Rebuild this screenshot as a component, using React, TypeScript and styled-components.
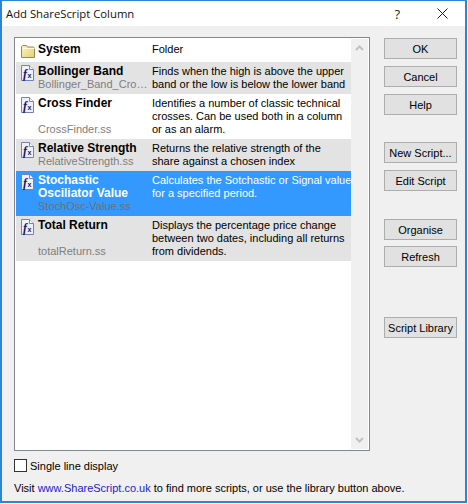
import React from "react";
import styled, { createGlobalStyle } from "styled-components";

type Script = {
    icon: "folder" | "script";
    name: string;
    file?: string;
    lines: string[];
    height: number;
    shaded?: boolean;
    selected?: boolean;
};

const scripts: Script[] = [
    { icon: "folder", name: "System", lines: ["Folder"], height: 22 },
    {
        icon: "script",
        name: "Bollinger Band",
        file: "Bollinger_Band_Cro…",
        lines: ["Finds when the high is above the upper", "band or the low is below the lower band"],
        height: 32,
        shaded: true
    },
    {
        icon: "script",
        name: "Cross Finder",
        file: "CrossFinder.ss",
        lines: [
            "Identifies a number of classic technical",
            "crosses. Can be used both in a column",
            "or as an alarm."
        ],
        height: 45
    },
    {
        icon: "script",
        name: "Relative Strength",
        file: "RelativeStrength.ss",
        lines: ["Returns the relative strength of the", "share against a chosen index"],
        height: 32,
        shaded: true
    },
    {
        icon: "script",
        name: "Stochastic\nOsciliator Value",
        file: "StochOsc-Value.ss",
        lines: ["Calculates the Sotchastic or Signal value", "for a specified period."],
        height: 45,
        selected: true
    },
    {
        icon: "script",
        name: "Total Return",
        file: "totalReturn.ss",
        lines: [
            "Displays the percentage price change",
            "between two dates, including all returns",
            "from dividends."
        ],
        height: 45,
        shaded: true
    }
];

const FolderIcon = () => (
    <IconSvg viewBox="0 0 16 16">
        <defs>
            <linearGradient id="folderFill" x1="0" y1="0" x2="1" y2="1">
                <stop offset="0" stopColor="#fdf6bb" />
                <stop offset="1" stopColor="#e6cf78" />
            </linearGradient>
        </defs>
        <path d="M1.5 14.5V3.5l1-1h4l1 1.5h6l1 1v9.5z" fill="url(#folderFill)" stroke="#8f8a5c" />
        <path d="M2.5 5.5h12" stroke="#fffbd8" />
    </IconSvg>
);

const ScriptIcon = () => (
    <IconSvg viewBox="0 0 16 16">
        <path d="M1.5.5h8l4 4v11h-12z" fill="#eef0fa" stroke="#7d7db8" />
        <path d="M9.5.5v4h4" fill="#fff" stroke="#7d7db8" />
        <FxLetter x="3" y="13">f</FxLetter>
        <FxSmall x="7.5" y="13">x</FxSmall>
    </IconSvg>
);

export default () => (
    <Dialog>
        <GlobalStyle />
        <TitleBar>
            <Title>Add ShareScript Column</Title>
            <HelpGlyph>?</HelpGlyph>
            <CloseIcon viewBox="0 0 11 11">
                <path d="M.5.5l10 10M10.5.5l-10 10" stroke="#1a1a1a" fill="none" />
            </CloseIcon>
        </TitleBar>
        <Body>
            <Main>
                <ListBox>
                    <Rows>
                        {scripts.map(s => (
                            <Row key={s.name} $height={s.height} $shaded={s.shaded} $selected={s.selected}>
                                <IconCell>{s.icon === "folder" ? <FolderIcon /> : <ScriptIcon />}</IconCell>
                                <NameCell>
                                    <Name>{s.name}</Name>
                                    {s.file && <FileName $selected={s.selected}>{s.file}</FileName>}
                                </NameCell>
                                <Description>
                                    {s.lines.map(l => (
                                        <div key={l}>{l}</div>
                                    ))}
                                </Description>
                            </Row>
                        ))}
                    </Rows>
                    <ScrollBar>
                        <Chevron viewBox="0 0 9 6">
                            <path d="M1 5l3.5-3.5L8 5" />
                        </Chevron>
                        <Chevron viewBox="0 0 9 6">
                            <path d="M1 1l3.5 3.5L8 1" />
                        </Chevron>
                    </ScrollBar>
                </ListBox>
                <Buttons>
                    <ButtonGroup>
                        <Button>OK</Button>
                        <Button>Cancel</Button>
                        <Button>Help</Button>
                    </ButtonGroup>
                    <ButtonGroup $top={27}>
                        <Button>New Script...</Button>
                        <Button>Edit Script</Button>
                    </ButtonGroup>
                    <ButtonGroup $top={28} $gap={6}>
                        <Button>Organise</Button>
                        <Button>Refresh</Button>
                    </ButtonGroup>
                    <ButtonGroup $top={50}>
                        <Button>Script Library</Button>
                    </ButtonGroup>
                </Buttons>
            </Main>
            <CheckRow>
                <CheckBox />
                Single line display
            </CheckRow>
            <Footer>
                Visit <SiteLink>www.ShareScript.co.uk</SiteLink> to find more scripts, or use the library button above.
            </Footer>
        </Body>
    </Dialog>
);

const GlobalStyle = createGlobalStyle`
    html, body {
        margin: 0;
        padding: 0;
        background: #fff;
    }
`;

const Dialog = styled.div`
    box-sizing: border-box;
    display: flex;
    flex-direction: column;
    width: 467px;
    height: 503px;
    border: solid #2b86d6;
    border-width: 1px 2px 2px 2px;
    background: #f0f0f0;
    font-family: "Liberation Sans", sans-serif;
    font-size: 11px;
    color: #000;
`;

const TitleBar = styled.div`
    display: flex;
    align-items: center;
    height: 25px;
    flex-shrink: 0;
    background: #fff;
    padding: 0 17px 0 4px;
`;

const Title = styled.div`
    flex: 1;
    font-family: "Open Sans", sans-serif;
    font-size: 11.3px;
    color: #111;
`;

const HelpGlyph = styled.div`
    font-family: "Open Sans", sans-serif;
    font-size: 13px;
    margin-right: 37px;
    color: #222;
`;

const CloseIcon = styled.svg`
    width: 11px;
    height: 11px;
`;

const Body = styled.div`
    flex: 1;
    display: flex;
    flex-direction: column;
    padding: 11px 8px 0 12px;
`;

const Main = styled.div`
    display: flex;
    gap: 14px;
`;

const ListBox = styled.div`
    box-sizing: border-box;
    display: flex;
    width: 356px;
    height: 414px;
    padding: 1px;
    border: 1px solid #828790;
    background: #fff;
`;

const Rows = styled.div`
    flex: 1;
    min-width: 0;
    padding-top: 1px;
`;

const Row = styled.div<{ $height: number; $shaded?: boolean; $selected?: boolean }>`
    box-sizing: border-box;
    display: flex;
    height: ${p => p.$height}px;
    background: ${p => (p.$selected ? "#3399ff" : p.$shaded ? "#e3e3e3" : "#fff")};
    color: ${p => (p.$selected ? "#fff" : "#000")};
    outline: ${p => (p.$selected ? "1px dotted #d0701a" : "none")};
    outline-offset: -1px;
    line-height: 13px;
    padding-top: 3px;
`;

const IconCell = styled.div`
    box-sizing: border-box;
    width: 22px;
    flex-shrink: 0;
    padding-left: 4px;
`;

const IconSvg = styled.svg`
    display: block;
    width: 16px;
    height: 16px;
`;

const FxLetter = styled.text`
    font-family: "Liberation Serif", serif;
    font-style: italic;
    font-weight: 700;
    font-size: 12px;
    fill: #14146e;
`;

const FxSmall = styled.text`
    font-family: "Liberation Sans", sans-serif;
    font-weight: 700;
    font-size: 7px;
    fill: #14146e;
`;

const NameCell = styled.div`
    box-sizing: border-box;
    width: 114px;
    flex-shrink: 0;
    display: flex;
    flex-direction: column;
    padding-right: 4px;
`;

const Name = styled.div`
    font-size: 12px;
    font-weight: 700;
    white-space: pre-line;
`;

const FileName = styled.div<{ $selected?: boolean }>`
    margin-top: auto;
    padding-bottom: 3px;
    color: ${p => (p.$selected ? "#6f6f6f" : "#7e7e7e")};
    white-space: nowrap;
`;

const Description = styled.div`
    flex: 1;
    white-space: nowrap;
`;

const ScrollBar = styled.div`
    width: 17px;
    flex-shrink: 0;
    display: flex;
    flex-direction: column;
    justify-content: space-between;
    align-items: center;
    padding: 6px 0;
    background: #f0f0f0;
`;

const Chevron = styled.svg`
    width: 9px;
    height: 6px;
    path {
        fill: none;
        stroke: #c2c2c2;
        stroke-width: 2;
    }
`;

const Buttons = styled.div`
    display: flex;
    flex-direction: column;
    width: 73px;
    padding-top: 1px;
`;

const ButtonGroup = styled.div<{ $top?: number; $gap?: number }>`
    display: flex;
    flex-direction: column;
    gap: ${p => p.$gap ?? 7}px;
    margin-top: ${p => p.$top ?? 0}px;
`;

const Button = styled.div`
    box-sizing: border-box;
    display: flex;
    align-items: center;
    justify-content: center;
    height: 21px;
    border: 1px solid #adadad;
    background: #e1e1e1;
    white-space: nowrap;
`;

const CheckRow = styled.label`
    display: flex;
    align-items: center;
    gap: 3px;
    margin-top: 8px;
`;

const CheckBox = styled.span`
    box-sizing: border-box;
    width: 13px;
    height: 13px;
    border: 1px solid #333;
    background: #fff;
`;

const Footer = styled.div`
    margin-top: 10px;
`;

const SiteLink = styled.span`
    color: #2222cc;
`;
